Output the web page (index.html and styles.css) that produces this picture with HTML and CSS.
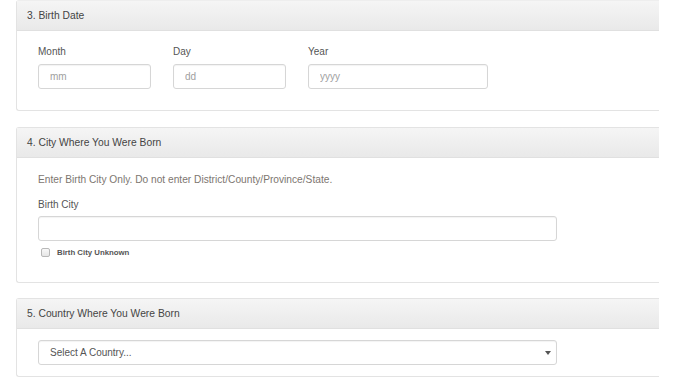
FILE: index.html
```html
<!DOCTYPE html>
<html lang="en">
<head>
    <meta charset="UTF-8">
    <meta name="viewport" content="width=device-width, initial-scale=1.0">
    <title>Birth Information</title>
    <link rel="stylesheet" href="styles.css">
</head>
<body>
    <div class="form">
        <div class="panel">
            <div class="panel-heading">3. Birth Date</div>
            <div class="panel-body date-body">
                <div class="field month">
                    <label>Month</label>
                    <input type="text" placeholder="mm">
                </div>
                <div class="field day">
                    <label>Day</label>
                    <input type="text" placeholder="dd">
                </div>
                <div class="field year">
                    <label>Year</label>
                    <input type="text" placeholder="yyyy">
                </div>
            </div>
        </div>

        <div class="panel">
            <div class="panel-heading">4. City Where You Were Born</div>
            <div class="panel-body city-body">
                <p class="help">Enter Birth City Only. Do not enter District/County/Province/State.</p>
                <label>Birth City</label>
                <input type="text" class="wide">
                <div class="check-row">
                    <input type="checkbox" id="cityUnknown">
                    <span>Birth City Unknown</span>
                </div>
            </div>
        </div>

        <div class="panel">
            <div class="panel-heading">5. Country Where You Were Born</div>
            <div class="panel-body country-body">
                <div class="select-wrap">
                    <select class="wide">
                        <option>Select A Country...</option>
                    </select>
                    <svg class="caret" width="6" height="4" viewBox="0 0 6 4"><path d="M0 0h6L3 4z" fill="#555"/></svg>
                </div>
            </div>
        </div>
    </div>
</body>
</html>
```

FILE: styles.css
```css
body {
    font-family: "Liberation Sans", Arial, sans-serif;
    margin: 0;
    padding: 0 0 0 16px;
    background-color: #fff;
    color: #444;
}

.form {
    width: 643px;
    display: flex;
    flex-direction: column;
    gap: 16px;
}

.panel {
    border: 1px solid #e3e3e3;
    border-right: none;
    border-radius: 3px 0 0 3px;
    background-color: #fff;
}

.panel:first-child {
    border-top-color: #eee;
}

.panel:last-child {
    margin-top: -1px;
}

.panel-heading {
    height: 29px;
    line-height: 29px;
    padding-left: 10px;
    font-size: 10.3px;
    color: #444;
    background: linear-gradient(#f5f5f5, #e9e9e9);
    border-bottom: 1px solid #e0e0e0;
}

.panel-body {
    padding-left: 21px;
}

label {
    display: block;
    font-size: 10px;
    line-height: 12px;
    color: #555;
}

input[type="text"], select {
    box-sizing: border-box;
    height: 25px;
    padding: 0 11px;
    font-family: "Liberation Sans", Arial, sans-serif;
    font-size: 10px;
    color: #555;
    border: 1px solid #d6d6d6;
    border-radius: 3px;
    box-shadow: inset 0 1px 1px rgba(0,0,0,0.05);
    background-color: #fff;
    margin: 0;
}

input::placeholder {
    color: #a0a0a0;
}

.date-body {
    display: flex;
    padding-top: 15px;
    padding-bottom: 21px;
}

.field label {
    margin-bottom: 6px;
}

.month, .day {
    width: 135px;
}

.month input, .day input {
    width: 113px;
}

.year input {
    width: 180px;
}

.city-body {
    padding-top: 16px;
    padding-bottom: 24px;
}

.help {
    margin: 0 0 13px;
    font-size: 10.2px;
    line-height: 12px;
    color: #7d7670;
}

.city-body label {
    margin-bottom: 5px;
}

.wide {
    width: 519px;
}

.check-row {
    display: flex;
    align-items: center;
    gap: 7px;
    margin-top: 5px;
    padding-left: 3px;
    height: 12px;
}

.check-row input {
    appearance: none;
    box-sizing: border-box;
    width: 9px;
    height: 9px;
    margin: 0;
    border: 1px solid #b8b8b8;
    border-radius: 2px;
    background: linear-gradient(#f8f8f8, #e6e6e6);
}

.check-row span {
    font-size: 7.8px;
    font-weight: bold;
    color: #555;
}

.country-body {
    padding-top: 11px;
    padding-bottom: 11px;
}

.select-wrap {
    position: relative;
    width: 519px;
}

select {
    appearance: none;
    display: block;
}

.caret {
    position: absolute;
    right: 6px;
    top: 11px;
}
```
